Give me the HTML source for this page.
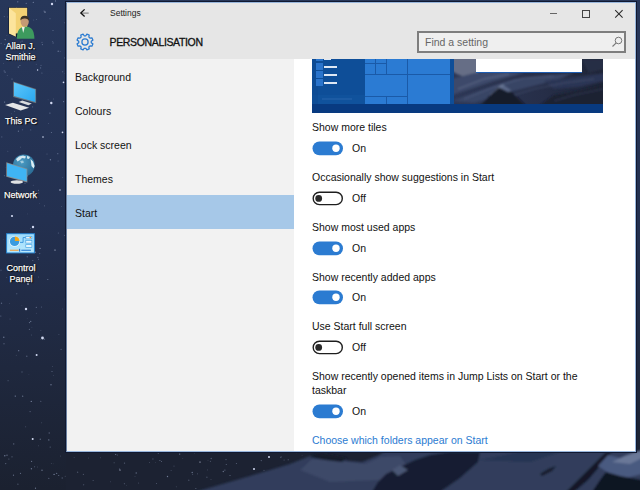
<!DOCTYPE html>
<html><head><meta charset="utf-8">
<style>
*{margin:0;padding:0;box-sizing:border-box}
html,body{width:640px;height:490px;overflow:hidden}
body{position:relative;background:#1c2438;font-family:"Liberation Sans",sans-serif}
.a{position:absolute}
.t{position:absolute;white-space:nowrap;line-height:12px;font-size:10.5px;color:#111}
.dl{position:absolute;white-space:nowrap;font-size:9px;line-height:10.7px;letter-spacing:0;-webkit-text-stroke:0.25px #fff;color:#fff;text-shadow:0 0 1px #000,0 0 1px #000,1px 1px 1px #000;text-align:center}
.tog{position:absolute;left:312px;width:31px;height:14px;border-radius:7px}
.on{background:#2b7bd1}
.on::after{content:"";position:absolute;left:20px;top:3px;width:8px;height:8px;border-radius:50%;background:#fff}
.off{border:2px solid #2a2a2a;background:#fff}
.off::after{content:"";position:absolute;left:3px;top:2px;width:7px;height:7px;border-radius:50%;background:#2a2a2a}
</style></head>
<body>
<!-- desktop background -->
<svg class="a" style="left:0;top:0" width="640" height="490" viewBox="0 0 640 490">
  <defs>
    <linearGradient id="sky" x1="0" y1="0" x2="0" y2="1">
      <stop offset="0" stop-color="#27375a"/>
      <stop offset="0.45" stop-color="#233050"/>
      <stop offset="0.75" stop-color="#1f283e"/>
      <stop offset="1" stop-color="#1b2130"/>
    </linearGradient>
    <linearGradient id="mt" x1="0" y1="0" x2="1" y2="0">
      <stop offset="0" stop-color="#2c3654"/>
      <stop offset="0.5" stop-color="#34406a"/>
      <stop offset="1" stop-color="#2e3a60"/>
    </linearGradient>
  </defs>
  <rect width="640" height="490" fill="url(#sky)"/>
  <filter id="bl" x="-5%" y="-20%" width="110%" height="140%"><feGaussianBlur stdDeviation="1.1"/></filter>
  <rect x="66" y="452" width="320" height="38" fill="#1c2232"/>
  <g filter="url(#bl)">
  <polygon points="195,492 250,476 290,464 310,456 330,458 350,461 362,462 379,455 385,451 642,451 642,492" fill="#303c5c"/>
  <polygon points="300,470 312,459 330,460 350,462 365,464 380,457 400,456 410,470 380,480 330,482" fill="#3c4868"/>
  <polygon points="310,457 318,453 332,455 347,458 342,462 325,460" fill="#161c2c"/>
  <polygon points="372,492 378,482 386,474 402,466 415,460 430,455 450,452 480,452 478,462 460,478 440,492" fill="#181e30"/>
  <polygon points="392,470 400,465 408,470 398,476" fill="#4a5674"/>
  <polygon points="480,460 520,452 560,452 530,462" fill="#283452"/>
  <polygon points="540,474 548,469 556,466 552,471 542,476" fill="#151b2a"/>
  <polygon points="566,492 584,474 598,460 606,452 612,452 600,466 588,480 574,492" fill="#121828"/>
  <polygon points="598,466 608,455 620,458 642,452 642,474 626,478 610,474" fill="#4a5a80"/>
  <polygon points="612,462 625,456 642,450 642,458 630,464" fill="#6a7898"/>
  <polygon points="592,492 600,480 606,472 620,476 642,480 642,492" fill="#0f1420"/>
  </g>
  
  
  <g fill="#aab8d8"><circle cx="10.0" cy="319.0" r="0.4" opacity="0.54"/><circle cx="38.5" cy="445.8" r="0.5" opacity="0.26"/><circle cx="4.6" cy="44.4" r="0.7" opacity="0.27"/><circle cx="62.5" cy="309.0" r="0.4" opacity="0.45"/><circle cx="64.4" cy="22.8" r="0.5" opacity="0.35"/><circle cx="7.8" cy="151.2" r="0.5" opacity="0.29"/><circle cx="12.4" cy="47.7" r="0.4" opacity="0.45"/><circle cx="32.8" cy="260.5" r="0.6" opacity="0.41"/><circle cx="161.5" cy="461.4" r="0.5" opacity="0.49"/><circle cx="37.9" cy="257.3" r="0.6" opacity="0.51"/><circle cx="64.7" cy="57.9" r="0.7" opacity="0.31"/><circle cx="61.6" cy="206.6" r="0.4" opacity="0.52"/><circle cx="57.8" cy="153.7" r="0.6" opacity="0.46"/><circle cx="30.1" cy="411.6" r="0.6" opacity="0.42"/><circle cx="4.0" cy="343.7" r="0.7" opacity="0.35"/><circle cx="44.1" cy="11.1" r="0.7" opacity="0.37"/><circle cx="32.6" cy="106.9" r="0.6" opacity="0.30"/><circle cx="25.8" cy="427.0" r="0.4" opacity="0.31"/><circle cx="18.3" cy="67.1" r="0.7" opacity="0.55"/><circle cx="27.4" cy="175.8" r="0.7" opacity="0.59"/><circle cx="11.6" cy="113.7" r="0.5" opacity="0.25"/><circle cx="114.1" cy="462.7" r="0.5" opacity="0.40"/><circle cx="37.4" cy="467.0" r="0.4" opacity="0.41"/><circle cx="26.3" cy="193.1" r="0.7" opacity="0.47"/><circle cx="4.4" cy="102.3" r="0.5" opacity="0.29"/><circle cx="6.8" cy="277.7" r="0.4" opacity="0.58"/><circle cx="4.6" cy="101.9" r="0.7" opacity="0.30"/><circle cx="22.9" cy="178.4" r="0.4" opacity="0.29"/><circle cx="64.5" cy="235.4" r="0.6" opacity="0.28"/><circle cx="22.6" cy="129.7" r="0.5" opacity="0.43"/><circle cx="62.8" cy="177.3" r="0.4" opacity="0.52"/><circle cx="42.4" cy="44.6" r="0.6" opacity="0.43"/><circle cx="159.9" cy="460.5" r="0.6" opacity="0.47"/><circle cx="52.0" cy="371.6" r="0.5" opacity="0.53"/><circle cx="261.3" cy="460.6" r="0.7" opacity="0.37"/><circle cx="1.8" cy="136.9" r="0.6" opacity="0.32"/><circle cx="22.7" cy="396.2" r="0.6" opacity="0.58"/><circle cx="14.6" cy="111.2" r="0.5" opacity="0.37"/><circle cx="65.0" cy="299.0" r="0.4" opacity="0.42"/><circle cx="52.8" cy="41.5" r="0.4" opacity="0.57"/><circle cx="264.0" cy="470.2" r="0.5" opacity="0.40"/><circle cx="5.7" cy="463.6" r="0.7" opacity="0.41"/><circle cx="88.4" cy="458.0" r="0.5" opacity="0.26"/><circle cx="30.7" cy="321.4" r="0.7" opacity="0.48"/><circle cx="36.2" cy="64.2" r="0.4" opacity="0.53"/><circle cx="93.1" cy="480.5" r="0.5" opacity="0.40"/><circle cx="284.1" cy="460.0" r="0.6" opacity="0.32"/><circle cx="50.4" cy="159.7" r="0.7" opacity="0.54"/><circle cx="48.8" cy="439.9" r="0.7" opacity="0.54"/><circle cx="100.5" cy="457.8" r="0.4" opacity="0.56"/><circle cx="9.3" cy="303.4" r="0.4" opacity="0.44"/><circle cx="34.2" cy="272.2" r="0.4" opacity="0.56"/><circle cx="12.6" cy="20.7" r="0.4" opacity="0.43"/><circle cx="50.2" cy="447.1" r="0.7" opacity="0.36"/><circle cx="226.0" cy="459.6" r="0.6" opacity="0.41"/><circle cx="31.6" cy="461.3" r="0.6" opacity="0.57"/><circle cx="119.5" cy="469.0" r="0.7" opacity="0.29"/><circle cx="4.8" cy="117.9" r="0.4" opacity="0.32"/><circle cx="8.1" cy="380.7" r="0.6" opacity="0.30"/><circle cx="171.1" cy="470.5" r="0.5" opacity="0.31"/><circle cx="34.0" cy="166.2" r="0.5" opacity="0.37"/><circle cx="24.2" cy="165.6" r="0.7" opacity="0.40"/><circle cx="21.9" cy="305.7" r="0.4" opacity="0.29"/><circle cx="126.3" cy="485.3" r="0.4" opacity="0.34"/><circle cx="51.4" cy="132.5" r="0.5" opacity="0.54"/><circle cx="35.4" cy="252.2" r="0.7" opacity="0.50"/><circle cx="3.8" cy="337.2" r="0.7" opacity="0.56"/><circle cx="1.1" cy="43.4" r="0.6" opacity="0.28"/><circle cx="83.6" cy="484.8" r="0.7" opacity="0.25"/><circle cx="176.3" cy="486.8" r="0.5" opacity="0.27"/><circle cx="12.0" cy="456.8" r="0.6" opacity="0.44"/><circle cx="29.4" cy="329.4" r="0.6" opacity="0.37"/><circle cx="16.5" cy="7.5" r="0.5" opacity="0.43"/><circle cx="29.5" cy="322.6" r="0.7" opacity="0.48"/><circle cx="58.7" cy="475.5" r="0.6" opacity="0.49"/><circle cx="156.5" cy="483.6" r="0.5" opacity="0.39"/><circle cx="3.6" cy="63.6" r="0.4" opacity="0.47"/><circle cx="179.7" cy="454.1" r="0.7" opacity="0.55"/><circle cx="18.6" cy="118.7" r="0.6" opacity="0.27"/><circle cx="17.8" cy="1.8" r="0.6" opacity="0.59"/><circle cx="210.4" cy="461.3" r="0.6" opacity="0.33"/><circle cx="22.1" cy="41.1" r="0.6" opacity="0.43"/><circle cx="33.3" cy="2.4" r="0.6" opacity="0.54"/><circle cx="38.7" cy="193.0" r="0.6" opacity="0.36"/><circle cx="38.6" cy="259.3" r="0.5" opacity="0.48"/><circle cx="65.0" cy="73.2" r="0.5" opacity="0.27"/><circle cx="280.4" cy="457.3" r="0.4" opacity="0.54"/><circle cx="58.9" cy="334.6" r="0.5" opacity="0.28"/><circle cx="42.0" cy="470.2" r="0.7" opacity="0.54"/><circle cx="41.4" cy="306.9" r="0.5" opacity="0.42"/><circle cx="52.6" cy="366.7" r="0.4" opacity="0.48"/><circle cx="48.6" cy="123.6" r="0.4" opacity="0.55"/><circle cx="49.9" cy="113.1" r="0.7" opacity="0.42"/><circle cx="31.6" cy="335.0" r="0.4" opacity="0.47"/><circle cx="5.1" cy="72.2" r="0.6" opacity="0.48"/><circle cx="41.0" cy="65.4" r="0.7" opacity="0.27"/><circle cx="44.4" cy="339.2" r="0.7" opacity="0.35"/><circle cx="30.7" cy="228.5" r="0.4" opacity="0.60"/><circle cx="20.6" cy="42.1" r="0.7" opacity="0.26"/><circle cx="54.1" cy="474.4" r="0.7" opacity="0.60"/><circle cx="60.5" cy="456.0" r="0.4" opacity="0.45"/><circle cx="34.6" cy="466.8" r="0.5" opacity="0.46"/><circle cx="18.5" cy="55.2" r="0.6" opacity="0.33"/><circle cx="194.3" cy="452.9" r="0.4" opacity="0.58"/><circle cx="26.8" cy="356.3" r="0.7" opacity="0.37"/><circle cx="55.5" cy="0.9" r="0.6" opacity="0.54"/><circle cx="61.1" cy="349.4" r="0.6" opacity="0.34"/><circle cx="25.8" cy="426.3" r="0.4" opacity="0.38"/><circle cx="18.2" cy="23.7" r="0.4" opacity="0.27"/><circle cx="41.9" cy="73.0" r="0.6" opacity="0.40"/><circle cx="51.0" cy="384.7" r="0.7" opacity="0.56"/><circle cx="211.0" cy="479.3" r="0.4" opacity="0.58"/><circle cx="40.6" cy="67.9" r="0.6" opacity="0.42"/><circle cx="211.2" cy="458.5" r="0.7" opacity="0.37"/><circle cx="48.8" cy="478.4" r="0.6" opacity="0.39"/><circle cx="31.9" cy="327.7" r="0.4" opacity="0.31"/><circle cx="13.7" cy="443.9" r="0.7" opacity="0.44"/><circle cx="22.0" cy="372.0" r="0.7" opacity="0.30"/><circle cx="6.0" cy="167.6" r="0.4" opacity="0.36"/><circle cx="53.4" cy="99.0" r="0.4" opacity="0.51"/><circle cx="27.3" cy="256.8" r="0.7" opacity="0.34"/><circle cx="197.5" cy="473.8" r="0.6" opacity="0.29"/><circle cx="41.6" cy="422.8" r="0.5" opacity="0.28"/><circle cx="167.5" cy="476.5" r="0.7" opacity="0.58"/><circle cx="296.4" cy="452.8" r="0.4" opacity="0.40"/><circle cx="4.8" cy="455.8" r="0.7" opacity="0.59"/><circle cx="7.2" cy="75.6" r="0.4" opacity="0.58"/><circle cx="36.4" cy="19.4" r="0.5" opacity="0.33"/><circle cx="236.4" cy="463.5" r="0.5" opacity="0.47"/><circle cx="28.9" cy="374.3" r="0.4" opacity="0.27"/><circle cx="38.5" cy="190.2" r="0.5" opacity="0.53"/><circle cx="35.5" cy="488.2" r="0.6" opacity="0.59"/><circle cx="58.3" cy="232.9" r="0.5" opacity="0.44"/><circle cx="27.2" cy="318.3" r="0.4" opacity="0.26"/><circle cx="44.5" cy="205.8" r="0.6" opacity="0.33"/><circle cx="24.4" cy="241.5" r="0.6" opacity="0.50"/><circle cx="26.2" cy="3.3" r="0.6" opacity="0.51"/><circle cx="13.5" cy="475.2" r="0.6" opacity="0.52"/><circle cx="30.7" cy="129.9" r="0.6" opacity="0.29"/><circle cx="40.3" cy="439.3" r="0.7" opacity="0.40"/><circle cx="62.6" cy="71.7" r="0.7" opacity="0.27"/><circle cx="39.3" cy="203.5" r="0.4" opacity="0.31"/><circle cx="47.0" cy="154.0" r="0.4" opacity="0.60"/><circle cx="152.9" cy="459.0" r="0.7" opacity="0.26"/><circle cx="25.0" cy="183.2" r="0.6" opacity="0.40"/><circle cx="5.2" cy="39.6" r="0.7" opacity="0.58"/><circle cx="63.6" cy="101.6" r="0.6" opacity="0.52"/><circle cx="53.1" cy="43.0" r="0.7" opacity="0.32"/><circle cx="29.5" cy="158.4" r="0.7" opacity="0.26"/><circle cx="53.6" cy="375.7" r="0.4" opacity="0.38"/><circle cx="53.0" cy="30.4" r="0.5" opacity="0.51"/><circle cx="155.5" cy="462.3" r="0.4" opacity="0.34"/><circle cx="149.6" cy="462.5" r="0.4" opacity="0.50"/><circle cx="53.2" cy="463.8" r="0.4" opacity="0.26"/><circle cx="31.4" cy="468.8" r="0.7" opacity="0.53"/><circle cx="281.1" cy="457.0" r="0.7" opacity="0.31"/><circle cx="226.3" cy="464.5" r="0.6" opacity="0.41"/><circle cx="223.3" cy="471.5" r="0.7" opacity="0.51"/><circle cx="4.3" cy="16.6" r="0.6" opacity="0.31"/><circle cx="6.9" cy="35.4" r="0.4" opacity="0.32"/><circle cx="65.2" cy="476.3" r="0.5" opacity="0.33"/><circle cx="40.9" cy="330.3" r="0.4" opacity="0.52"/><circle cx="18.4" cy="131.2" r="0.6" opacity="0.51"/><circle cx="16.3" cy="120.2" r="0.5" opacity="0.35"/><circle cx="115.7" cy="454.5" r="0.6" opacity="0.60"/><circle cx="15.3" cy="396.1" r="0.7" opacity="0.60"/><circle cx="31.3" cy="401.4" r="0.7" opacity="0.57"/><circle cx="19.4" cy="58.4" r="0.5" opacity="0.46"/><circle cx="117.3" cy="454.9" r="0.5" opacity="0.41"/><circle cx="51.3" cy="463.4" r="0.4" opacity="0.47"/><circle cx="158.3" cy="453.4" r="0.6" opacity="0.30"/><circle cx="16.8" cy="293.7" r="0.5" opacity="0.54"/><circle cx="174.0" cy="466.1" r="0.6" opacity="0.28"/><circle cx="32.7" cy="236.9" r="0.7" opacity="0.29"/><circle cx="36.3" cy="313.2" r="0.4" opacity="0.48"/><circle cx="17.9" cy="484.2" r="0.6" opacity="0.40"/><circle cx="49.2" cy="433.0" r="0.7" opacity="0.40"/><circle cx="48.1" cy="99.8" r="0.4" opacity="0.40"/><circle cx="7.5" cy="44.3" r="0.6" opacity="0.41"/><circle cx="1.0" cy="270.3" r="0.7" opacity="0.28"/><circle cx="24.5" cy="247.2" r="0.5" opacity="0.37"/><circle cx="11.3" cy="32.9" r="0.7" opacity="0.42"/><circle cx="62.2" cy="478.0" r="0.7" opacity="0.36"/><circle cx="42.0" cy="42.3" r="0.5" opacity="0.47"/><circle cx="230.0" cy="475.4" r="0.5" opacity="0.54"/><circle cx="14.4" cy="195.9" r="0.5" opacity="0.38"/><circle cx="16.3" cy="355.2" r="0.5" opacity="0.26"/><circle cx="50.0" cy="18.7" r="0.6" opacity="0.29"/><circle cx="36.3" cy="307.3" r="0.6" opacity="0.48"/><circle cx="16.5" cy="190.7" r="0.6" opacity="0.41"/><circle cx="1.5" cy="303.3" r="0.7" opacity="0.41"/><circle cx="40.8" cy="401.3" r="0.5" opacity="0.53"/><circle cx="4.4" cy="175.7" r="0.6" opacity="0.28"/><circle cx="33.7" cy="20.0" r="0.5" opacity="0.28"/><circle cx="33.3" cy="185.2" r="0.5" opacity="0.26"/><circle cx="40.5" cy="339.3" r="0.4" opacity="0.32"/><circle cx="195.9" cy="488.4" r="0.5" opacity="0.49"/><circle cx="124.4" cy="483.7" r="0.6" opacity="0.31"/><circle cx="138.6" cy="483.0" r="0.5" opacity="0.34"/><circle cx="192.7" cy="474.5" r="0.5" opacity="0.36"/><circle cx="12.0" cy="79.0" r="0.6" opacity="0.49"/><circle cx="110.5" cy="481.8" r="0.4" opacity="0.52"/><circle cx="56.6" cy="473.4" r="0.7" opacity="0.44"/><circle cx="58.2" cy="51.3" r="0.7" opacity="0.51"/><circle cx="24.8" cy="180.8" r="0.5" opacity="0.38"/><circle cx="182.8" cy="458.7" r="0.4" opacity="0.35"/><circle cx="20.5" cy="473.3" r="0.6" opacity="0.51"/><circle cx="124.5" cy="463.1" r="0.7" opacity="0.40"/><circle cx="3.2" cy="239.3" r="0.4" opacity="0.26"/><circle cx="23.4" cy="52.1" r="0.6" opacity="0.44"/><circle cx="19.9" cy="65.5" r="0.6" opacity="0.47"/><circle cx="8.9" cy="458.9" r="0.5" opacity="0.50"/><circle cx="4.2" cy="70.9" r="0.6" opacity="0.39"/><circle cx="0.8" cy="316.0" r="0.6" opacity="0.46"/><circle cx="39.7" cy="253.6" r="0.7" opacity="0.34"/><circle cx="77.6" cy="472.2" r="0.7" opacity="0.31"/><circle cx="60.2" cy="51.4" r="0.5" opacity="0.30"/><circle cx="40.1" cy="248.4" r="0.7" opacity="0.53"/><circle cx="20.4" cy="147.1" r="0.4" opacity="0.60"/><circle cx="192.2" cy="472.5" r="0.7" opacity="0.55"/><circle cx="188.8" cy="480.2" r="0.7" opacity="0.31"/><circle cx="135.0" cy="476.5" r="0.4" opacity="0.37"/><circle cx="136.2" cy="473.0" r="0.7" opacity="0.49"/><circle cx="302.1" cy="455.2" r="0.4" opacity="0.31"/><circle cx="288.2" cy="459.7" r="0.5" opacity="0.51"/><circle cx="58.1" cy="161.0" r="0.5" opacity="0.38"/><circle cx="207.6" cy="469.9" r="0.4" opacity="0.55"/><circle cx="47.8" cy="279.5" r="0.6" opacity="0.53"/><circle cx="38.6" cy="277.0" r="0.5" opacity="0.30"/><circle cx="7.0" cy="455.2" r="0.6" opacity="0.59"/><circle cx="74.1" cy="457.3" r="0.4" opacity="0.49"/><circle cx="83.4" cy="474.4" r="0.6" opacity="0.32"/><circle cx="206.9" cy="477.2" r="0.7" opacity="0.29"/><circle cx="7.4" cy="16.9" r="0.4" opacity="0.54"/><circle cx="19.0" cy="48.9" r="0.4" opacity="0.53"/><circle cx="19.4" cy="164.9" r="0.6" opacity="0.26"/><circle cx="18.7" cy="350.7" r="0.6" opacity="0.57"/><circle cx="224.9" cy="470.1" r="0.6" opacity="0.47"/><circle cx="27.3" cy="213.9" r="0.4" opacity="0.37"/><circle cx="208.0" cy="460.2" r="0.4" opacity="0.45"/></g>
<g fill="#d0d8f0"><circle cx="26" cy="309" r="1.2"/><circle cx="42.5" cy="338" r="1.4"/><circle cx="36.6" cy="355" r="1"/><circle cx="32.7" cy="439" r="1"/><circle cx="12" cy="216" r="1.1"/><circle cx="33" cy="227" r="1.2"/><circle cx="52" cy="4" r="1.2"/><circle cx="45" cy="12" r="0.6"/><circle cx="269" cy="457" r="1"/><circle cx="254" cy="469" r="1"/><circle cx="120" cy="470" r="0.6"/><circle cx="200" cy="462" r="0.6"/><circle cx="51.3" cy="103" r="1.2"/><circle cx="63.5" cy="82.4" r="0.8"/><circle cx="43" cy="137" r="0.8"/><circle cx="62.5" cy="132.4" r="0.8"/><circle cx="37.6" cy="70" r="0.7"/><circle cx="60" cy="190" r="0.7"/><circle cx="28" cy="284" r="0.8"/><circle cx="55" cy="250" r="0.6"/></g>
</svg>

<!-- desktop icons -->
<div class="a" style="left:0;top:0;width:60px;height:290px">
  <!-- user folder -->
  <svg class="a" style="left:0;top:0" width="40" height="40" viewBox="0 0 40 40">
    <path d="M8.3 7.2 L27.7 7.2 L27.7 34 L16 37.2 L8.3 34 Z" fill="#0c1426" opacity="0.7"/>
    <rect x="9" y="7.8" width="18.2" height="25.6" fill="#f3d274"/>
    <path d="M9 7.8 L15.8 13.2 L15.8 36.7 L9 33.4 Z" fill="#fce49c"/>
    <path d="M16.8 38.8 Q16.8 26.5 25.6 26.5 Q34.4 26.5 34.4 38.8 Z" fill="#3d9a5e"/>
    <path d="M21.8 27 L23.2 33 L24.8 27 Z" fill="#eef0ea"/>
    <ellipse cx="24.7" cy="21.8" rx="4.1" ry="4.8" fill="#c49a74"/>
    <path d="M20.4 20.5 Q20 15.8 24.8 15.8 Q29.4 15.8 29 20.5 Q27 18.2 24.6 18.6 Q22 18.4 20.4 20.5 Z" fill="#3a3226"/>
  </svg>
  <div class="dl" style="left:0;top:40.9px;width:41px">Allan J.<br>Smithie</div>
  <!-- This PC -->
  <svg class="a" style="left:0;top:70px" width="40" height="45" viewBox="0 70 40 45">
    <defs><linearGradient id="scr" x1="0" y1="0" x2="1" y2="1"><stop offset="0" stop-color="#5cc6fa"/><stop offset="1" stop-color="#2aa8f0"/></linearGradient></defs>
    <path d="M13.2 81.4 L36.1 88.9 L36.1 103.2 L13.2 96.9 Z" fill="#6a737c"/>
    <path d="M14 82.6 L35.3 89.6 L35.3 102 L14 96 Z" fill="url(#scr)"/>
    <path d="M18.7 102 L22.2 100.6 L31.8 103.5 L28.4 105.3 Z" fill="#d9dcdf"/>
    <path d="M5.1 105 L12.9 102.7 L29.1 107.8 L20.6 110.5 Z" fill="#e4e6e8"/>
  </svg>
  <div class="dl" style="left:0;top:115.8px;width:42px">This PC</div>
  <!-- Network -->
  <svg class="a" style="left:0;top:146px" width="40" height="42" viewBox="0 146 40 42">
    <defs><radialGradient id="glb" cx="0.4" cy="0.35" r="0.7"><stop offset="0" stop-color="#4a9cc4"/><stop offset="1" stop-color="#2a6a94"/></radialGradient></defs>
    <circle cx="23.9" cy="165.3" r="10.9" fill="url(#glb)"/>
    <path d="M16 159 L19 156.5 L23 155.5 L26 156.5 L25 158.5 L22 158 L20 160 L17.5 161.5 Z" fill="#d4e8f0"/>
    <path d="M27 155.8 L30 157 L29 159 L27 158.5 Z" fill="#c8e2ec"/>
    <path d="M30.5 159 L33 161.5 L34.6 166 L33.6 168.5 L31.5 166 L31 162 Z" fill="#dceef4"/>
    <path d="M20 161 L23 160.5 L24 162.5 L21.5 163.5 Z" fill="#b8d8e6" opacity=".8"/>
    
    <path d="M6.3 162.2 L27.3 168.7 L27.3 182.4 L6.3 176.8 Z" fill="#8a8e90"/>
    <path d="M7 163.2 L26.6 169.3 L26.6 181.2 L7 176 Z" fill="#3fb4f4"/>
    <ellipse cx="16.8" cy="182" rx="6.2" ry="1.8" fill="#e0e2e4"/>
  </svg>
  <div class="dl" style="left:0;top:190.1px;width:41px">Network</div>
  <!-- Control Panel -->
  <svg class="a" style="left:0;top:228px" width="40" height="30" viewBox="0 228 40 30">
    <defs><linearGradient id="cpg" x1="0" y1="0" x2="0" y2="1"><stop offset="0" stop-color="#9ddcfc"/><stop offset="1" stop-color="#b8e8fd"/></linearGradient></defs>
    <rect x="6.1" y="233.2" width="28.8" height="20.2" fill="#2a8ad8"/>
    <rect x="7.1" y="234.2" width="26.8" height="18.2" fill="url(#cpg)"/>
    <circle cx="14.6" cy="241.4" r="5.4" fill="#e8f6fe"/>
    <circle cx="14.6" cy="241.4" r="4.7" fill="#3a9ce0"/>
    <path d="M14.9 241.1 L14.9 236.4 A4.7 4.7 0 0 1 19.6 241.1 Z" fill="#f5a818"/>
    <path d="M20 242.4 L23.1 242.4 L23.1 237.5 L25.8 237.5" stroke="#2a8ad8" stroke-width="0.8" fill="none"/>
    <rect x="25.8" y="236.3" width="6.1" height="2.6" fill="#e6f6fe" stroke="#3a9ce0" stroke-width="0.6"/>
    <rect x="25.8" y="240.5" width="6.1" height="2.6" fill="#e6f6fe" stroke="#3a9ce0" stroke-width="0.6"/>
    <rect x="25.8" y="244.7" width="6.1" height="2.6" fill="#e6f6fe" stroke="#3a9ce0" stroke-width="0.6"/>
    <circle cx="30.3" cy="237.6" r="0.8" fill="#f08a20"/>
    <rect x="9.8" y="249.7" width="8.8" height="1.1" fill="#f0a040"/>
    <rect x="21.3" y="249.7" width="9.6" height="1.1" fill="#2a7ad0"/>
    <rect x="19" y="248.8" width="1.2" height="2.8" fill="#2a7ad0"/>
  </svg>
  <div class="dl" style="left:0;top:262.9px;width:42px">Control<br>Panel</div>
</div>

<!-- window -->
<div class="a" style="left:65px;top:1px;width:572px;height:452px;background:#101830"></div>
<div class="a" style="left:66px;top:2px;width:570px;height:450px;background:#fff;border:1px solid #98b6dc;border-left-color:#6a80a0;overflow:hidden">
  <!-- header -->
  <div class="a" style="left:0;top:0;width:568px;height:56px;background:#e6e6e6"></div>
  <!-- back arrow -->
  <svg class="a" style="left:0;top:0" width="30" height="20" viewBox="0 0 30 20">
    <path d="M14 10.1 L21.7 10.1" stroke="#666" stroke-width="0.9" fill="none"/>
    <path d="M17.6 6.4 L13.8 10.1 L17.6 13.6" stroke="#111" stroke-width="1.3" fill="none"/>
  </svg>
  <div class="t" style="left:43px;top:5px;font-size:8.5px;line-height:10px;color:#222">Settings</div>
  <!-- min / max / close -->
  <div class="a" style="left:483px;top:10px;width:7px;height:1px;background:#666"></div>
  <div class="a" style="left:515px;top:7px;width:8px;height:8px;border:1px solid #444"></div>
  <svg class="a" style="left:547px;top:6px" width="10" height="10" viewBox="0 0 10 10">
    <path d="M1.2 1.2 L8.6 8.6 M8.6 1.2 L1.2 8.6" stroke="#2a2a2a" stroke-width="1.05" fill="none"/>
  </svg>
  <!-- gear -->
  <svg class="a" style="left:7.5px;top:28.6px" width="20" height="20" viewBox="0 0 20 20">
    <path d="M10.82 3.75 L11.89 2.12 L14.23 3.09 L13.84 5.00 L15.00 6.16 L16.91 5.77 L17.88 8.11 L16.25 9.18 L16.25 10.82 L17.88 11.89 L16.91 14.23 L15.00 13.84 L13.84 15.00 L14.23 16.91 L11.89 17.88 L10.82 16.25 L9.18 16.25 L8.11 17.88 L5.77 16.91 L6.16 15.00 L5.00 13.84 L3.09 14.23 L2.12 11.89 L3.75 10.82 L3.75 9.18 L2.12 8.11 L3.09 5.77 L5.00 6.16 L6.16 5.00 L5.77 3.09 L8.11 2.12 L9.18 3.75 Z" stroke="#2b7bd1" stroke-width="1.25" stroke-linejoin="round" fill="none"/>
    <circle cx="10" cy="10" r="3.1" stroke="#2b7bd1" stroke-width="1.25" fill="none"/>
  </svg>
  <div class="t" style="left:42.5px;top:33px;font-size:10.5px;font-weight:normal;-webkit-text-stroke:0.3px #111;letter-spacing:-0.35px;color:#111">PERSONALISATION</div>
  <!-- search -->
  <div class="a" style="left:350px;top:28px;width:209px;height:22px;border:2px solid #7e7e7e;background:#efefef"></div>
  <div class="t" style="left:358px;top:33px;font-size:10.5px;color:#666">Find a setting</div>
  <svg class="a" style="left:543.8px;top:33px" width="12" height="12" viewBox="0 0 12 12">
    <circle cx="7.5" cy="4.5" r="3.3" stroke="#777" stroke-width="1" fill="none"/>
    <path d="M5.2 6.8 L1.5 10.5" stroke="#777" stroke-width="1.1"/>
  </svg>

  <!-- nav -->
  <div class="a" style="left:0;top:56px;width:227px;height:394px;background:#f2f2f2"></div>
  <div class="a" style="left:0;top:192px;width:227px;height:34px;background:#a6c8e8"></div>
  <div class="t" style="left:8px;top:67.5px">Background</div>
  <div class="t" style="left:8px;top:101.5px">Colours</div>
  <div class="t" style="left:8px;top:135.5px">Lock screen</div>
  <div class="t" style="left:8px;top:169.5px">Themes</div>
  <div class="t" style="left:8px;top:203.5px">Start</div>

  <!-- preview -->
  <div class="a" style="left:245px;top:56px;width:291px;height:54px;background:#0c4a94;overflow:hidden">
    <!-- start menu left column -->
    <div class="a" style="left:0;top:0;width:53px;height:45px;background:#0e4e98"></div>
    <div class="a" style="left:0;top:36px;width:53px;height:9px;background:#10529c"></div><div class="a" style="left:10px;top:39px;width:30px;height:2px;background:#2462aa;opacity:.6"></div><div class="a" style="left:0;top:0;width:6px;height:45px;background:#0b4890;opacity:.5"></div>
    <div class="a" style="left:4px;top:0;width:7px;height:2px;background:#2a74cc"></div>
    <div class="a" style="left:4px;top:4px;width:7px;height:7px;background:#2a74cc"></div>
    <div class="a" style="left:4px;top:12px;width:7px;height:7px;background:#2a74cc"></div>
    <div class="a" style="left:4px;top:20px;width:7px;height:7px;background:#2a74cc"></div>
    <div class="a" style="left:12px;top:0;width:7px;height:1px;background:#dfe8f4"></div>
    <div class="a" style="left:12px;top:7px;width:13px;height:2px;background:#dfe8f4"></div>
    <div class="a" style="left:12px;top:15px;width:13px;height:2px;background:#dfe8f4"></div>
    <div class="a" style="left:12px;top:23px;width:13px;height:2px;background:#dfe8f4"></div>
    <!-- tiles -->
    <div class="a" style="left:53px;top:0;width:85px;height:45px;background:#2b7bd3"></div>
    <div class="a" style="left:63px;top:0;width:1px;height:15px;background:#1a5aa8"></div>
    <div class="a" style="left:74px;top:0;width:1px;height:15px;background:#1a5aa8"></div>
    <div class="a" style="left:53px;top:4px;width:21px;height:1px;background:#1a5aa8"></div>
    <div class="a" style="left:53px;top:15px;width:85px;height:1px;background:#1a5aa8"></div>
    <div class="a" style="left:95px;top:0;width:1px;height:45px;background:#1a5aa8"></div>
    <div class="a" style="left:53px;top:37px;width:42px;height:1px;background:#1a5aa8"></div>
    <div class="a" style="left:74px;top:37px;width:1px;height:8px;background:#1a5aa8"></div>
    <div class="a" style="left:138px;top:0;width:4px;height:45px;background:#0e4e98"></div>
    <!-- wallpaper -->
    <svg class="a" style="left:142px;top:0" width="149" height="45" viewBox="0 0 149 45">
      <defs>
        <linearGradient id="pw" x1="0" y1="0" x2="1" y2="0"><stop offset="0" stop-color="#2e3856"/><stop offset="0.6" stop-color="#262e48"/><stop offset="1" stop-color="#1e2436"/></linearGradient>
        <filter id="pb" x="-10%" y="-10%" width="120%" height="120%"><feGaussianBlur stdDeviation="0.8"/></filter>
      </defs>
      <rect width="149" height="45" fill="url(#pw)"/>
      <g filter="url(#pb)">
      <path d="M-2 -2 L24 -2 L24 14 Q16 18 8 17 Q2 15 -2 12 Z" fill="#666e86"/>
      <path d="M-2 20 L20 14 L45 12 L70 14 L40 22 L10 32 L-2 36 Z" fill="#3e4a6a"/>
      <path d="M-2 42 L30 30 L60 20 L95 16 L120 14 L100 22 L60 32 L20 44 Z" fill="#384465"/>
      <path d="M26 47 L38 34 L47 26 L56 31 L72 47 Z" fill="#141a2a"/>
      <path d="M44 28 L48 25 L58 32 L54 33 Z" fill="#5a6888"/>
      <path d="M85 47 L100 36 L125 32 L151 26 L151 47 Z" fill="#1a2032"/>
      <path d="M90 22 L120 18 L151 14 L151 22 L125 28 L100 30 Z" fill="#2c3654"/>
      <path d="M128 0 L151 0 L151 10 L135 14 Z" fill="#262e44"/>
      <path d="M4 30 L30 20 L55 15" stroke="#6a7694" stroke-width="1" fill="none" opacity=".7"/>
      <path d="M10 40 L40 28 L70 19 L100 17" stroke="#5a6686" stroke-width="1.2" fill="none" opacity=".6"/>
      <path d="M60 36 L80 30 L110 24 L140 20" stroke="#4e5a7a" stroke-width="1" fill="none" opacity=".6"/>
      <path d="M100 42 L120 36 L149 30" stroke="#4a5676" stroke-width="1" fill="none" opacity=".5"/>
      <path d="M36 36 L44 29 L50 26" stroke="#8a96b0" stroke-width="0.8" fill="none" opacity=".7"/>
      </g>
      <rect x="22" y="0" width="106" height="13" fill="#fff"/>
      <rect x="22" y="13" width="106" height="1" fill="#1d5cb0"/>
    </svg>
    <!-- taskbar -->
    <div class="a" style="left:0;top:45px;width:291px;height:9px;background:#083a80"></div>
  </div>

  <!-- settings rows -->
  <div class="t" style="left:245px;top:118px">Show more tiles</div>
  <svg class="a" style="left:244.5px;top:137.9px" width="32" height="15" viewBox="0 0 32 15"><rect x="0.5" y="0.5" width="30.5" height="13.8" rx="6.9" fill="#2b7bd1"/><circle cx="24" cy="7.3" r="3.7" fill="#fff"/></svg>
  <div class="t" style="left:285px;top:139px">On</div>

  <div class="t" style="left:245px;top:168px">Occasionally show suggestions in Start</div>
  <svg class="a" style="left:244.5px;top:187.6px" width="32" height="15" viewBox="0 0 32 15"><rect x="1.2" y="1.2" width="29.1" height="12.4" rx="6.2" fill="#fff" stroke="#1e1e1e" stroke-width="1.4"/><circle cx="6.7" cy="7.4" r="3.4" fill="#2a2a2a"/></svg>
  <div class="t" style="left:285px;top:189px">Off</div>

  <div class="t" style="left:245px;top:218px">Show most used apps</div>
  <svg class="a" style="left:244.5px;top:237.6px" width="32" height="15" viewBox="0 0 32 15"><rect x="0.5" y="0.5" width="30.5" height="13.8" rx="6.9" fill="#2b7bd1"/><circle cx="24" cy="7.3" r="3.7" fill="#fff"/></svg>
  <div class="t" style="left:285px;top:239px">On</div>

  <div class="t" style="left:245px;top:268px">Show recently added apps</div>
  <svg class="a" style="left:244.5px;top:287.0px" width="32" height="15" viewBox="0 0 32 15"><rect x="0.5" y="0.5" width="30.5" height="13.8" rx="6.9" fill="#2b7bd1"/><circle cx="24" cy="7.3" r="3.7" fill="#fff"/></svg>
  <div class="t" style="left:285px;top:288px">On</div>

  <div class="t" style="left:245px;top:317px">Use Start full screen</div>
  <svg class="a" style="left:244.5px;top:336.6px" width="32" height="15" viewBox="0 0 32 15"><rect x="1.2" y="1.2" width="29.1" height="12.4" rx="6.2" fill="#fff" stroke="#1e1e1e" stroke-width="1.4"/><circle cx="6.7" cy="7.4" r="3.4" fill="#2a2a2a"/></svg>
  <div class="t" style="left:285px;top:338px">Off</div>

  <div class="t" style="left:245px;top:365.5px;line-height:14px">Show recently opened items in Jump Lists on Start or the<br>taskbar</div>
  <svg class="a" style="left:244.5px;top:400.5px" width="32" height="15" viewBox="0 0 32 15"><rect x="0.5" y="0.5" width="30.5" height="13.8" rx="6.9" fill="#2b7bd1"/><circle cx="24" cy="7.3" r="3.7" fill="#fff"/></svg>
  <div class="t" style="left:285px;top:402px">On</div>

  <div class="t" style="left:245px;top:430.6px;color:#2b7bd1">Choose which folders appear on Start</div>
</div>
</body></html>
